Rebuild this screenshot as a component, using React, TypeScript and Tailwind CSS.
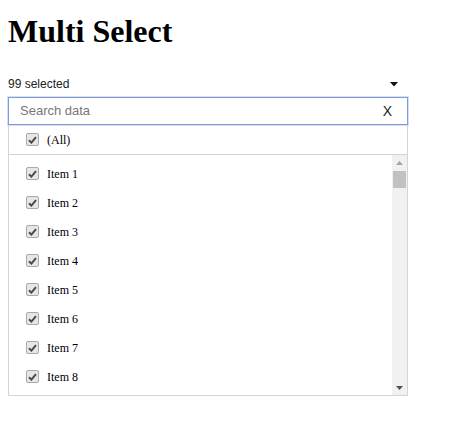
import React from 'react';

const items = Array.from({ length: 8 }, (_, i) => `Item ${i + 1}`);

function Check() {
  return (
    <span className="flex h-[13px] w-[13px] shrink-0 items-center justify-center rounded-[2px] border border-[#a9a9a9] bg-[#e6e6e6]">
      <svg width="9" height="8" viewBox="0 0 9 8">
        <path d="M1 4.2 L3.4 6.6 L8 1.2" fill="none" stroke="#4a4a4a" strokeWidth="2" />
      </svg>
    </span>
  );
}

function Row({ label }: { label: string }) {
  return (
    <div className="flex h-[29px] items-center gap-[8px] pl-[17px]">
      <Check />
      <span className="text-[12px] text-black" style={{ fontFamily: '"Liberation Serif", serif' }}>
        {label}
      </span>
    </div>
  );
}

export default function App() {
  return (
    <div className="min-h-screen bg-white px-[8px]" style={{ fontFamily: '"Liberation Sans", Arial, sans-serif' }}>
      <h1
        className="pt-[13px] text-[32px] font-bold leading-[37px] text-black"
        style={{ fontFamily: '"Liberation Serif", serif' }}
      >
        Multi Select
      </h1>

      <div className="w-[400px]">
        {/* header */}
        <div className="mt-[27px] flex h-[14px] items-center justify-between pr-[10px]">
          <span className="text-[12px] leading-[14px] text-[#222]">99 selected</span>
          <svg width="8" height="5" viewBox="0 0 8 5">
            <path d="M0 0 L8 0 L4 4.5 Z" fill="#111" />
          </svg>
        </div>

        {/* search */}
        <div className="mt-[6px] flex h-[28px] items-center border border-[#7f9cd8] pl-[11px] pr-[15px] shadow-[0_0_0_1px_rgba(127,156,216,0.3)]">
          <span className="flex-1 text-[13px] text-[#777]">Search data</span>
          <span className="text-[14px] text-[#222]">X</span>
        </div>

        {/* panel */}
        <div className="border-x border-b border-[#d4d4d4]">
          <div className="border-b border-[#d4d4d4]">
            <Row label="(All)" />
          </div>
          <div className="flex h-[240px]">
            <div className="flex-1 overflow-hidden pt-[4px]">
              {items.map((it) => (
                <Row key={it} label={it} />
              ))}
            </div>
            {/* scrollbar */}
            <div className="flex w-[15px] flex-col items-center bg-[#f1f1f1]">
              <div className="flex h-[15px] items-center justify-center">
                <svg width="7" height="4" viewBox="0 0 7 4">
                  <path d="M0 4 L7 4 L3.5 0 Z" fill="#a3a3a3" />
                </svg>
              </div>
              <div className="mt-[1px] h-[17px] w-[13px] bg-[#c1c1c1]" />
              <div className="flex-1" />
              <div className="flex h-[15px] items-center justify-center">
                <svg width="7" height="4" viewBox="0 0 7 4">
                  <path d="M0 0 L7 0 L3.5 4 Z" fill="#505050" />
                </svg>
              </div>
            </div>
          </div>
        </div>
      </div>
    </div>
  );
}
